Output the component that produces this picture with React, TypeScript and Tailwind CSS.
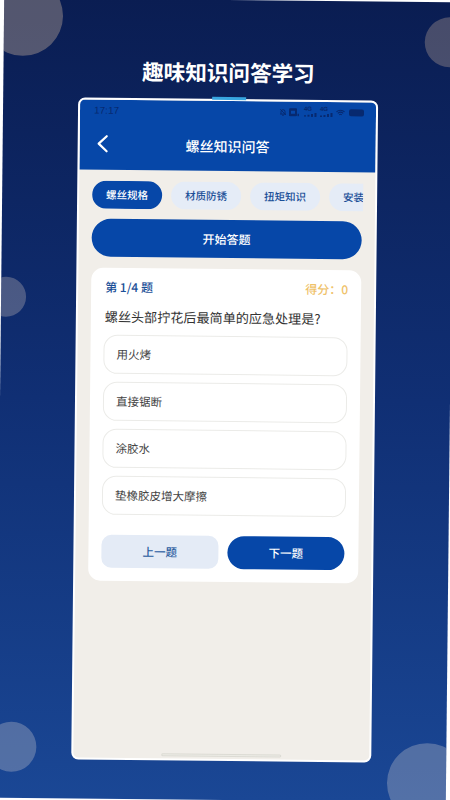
const font = "font-['Noto_Sans_CJK_SC','Noto_Sans',sans-serif]";

const tabs = ["螺丝规格", "材质防锈", "扭矩知识", "安装"];
const options = ["用火烤", "直接锯断", "涂胶水", "垫橡胶皮增大摩擦"];

const Signal = () => (
  <div className="relative w-[13px] h-[9px]">
    <span className="absolute left-0 top-[-2px] text-[6px] leading-[6px] font-bold font-['Liberation_Sans',sans-serif]">4G</span>
    <svg className="absolute left-0 bottom-0" width="13" height="4" viewBox="0 0 13 4" fill="currentColor">
      <rect x="0" y="2.5" width="2" height="1.5" />
      <rect x="3.5" y="2" width="2" height="2" />
      <rect x="7" y="1" width="2" height="3" />
      <rect x="10.5" y="0" width="2" height="4" />
    </svg>
  </div>
);

const StatusIcons = () => (
  <div className="flex items-center text-[#07296f]">
    {/* muted bell */}
    <svg width="8" height="9" viewBox="0 0 10 10" fill="none" stroke="currentColor" strokeWidth="1.2">
      <path d="M2.5 7.5V4.5a2.5 2.5 0 0 1 5 0v3M1.5 7.5h7M4 9h2M1.5 1.5l7 7" />
    </svg>
    {/* hd box */}
    <svg width="10" height="9" viewBox="0 0 10 9" className="ml-[2px]">
      <rect x="0" y="0.5" width="8" height="8" rx="1" fill="currentColor" />
      <rect x="2" y="3" width="4" height="3" fill="#0647a8" />
      <rect x="8.5" y="6" width="1.5" height="2.5" fill="currentColor" />
    </svg>
    <div className="ml-[5px]"><Signal /></div>
    <div className="ml-[3px]"><Signal /></div>
    <svg width="9" height="8" viewBox="0 0 10 8" fill="none" stroke="currentColor" strokeWidth="1.2" className="ml-[3px]">
      <path d="M0.5 2.5a6.5 6.5 0 0 1 9 0M2 4.2a4.4 4.4 0 0 1 6 0M3.6 5.8a2 2 0 0 1 2.8 0" />
    </svg>
    <div className="ml-[4px] w-[15px] h-[7px] rounded-[2px] bg-[#07296f]" />
  </div>
);

export default function App() {
  return (
    <div className={`w-[450px] h-[800px] overflow-hidden bg-white ${font}`}>
      <div className="relative w-[450px] h-[800px] rotate-[0.6deg] overflow-hidden bg-gradient-to-b from-[#0a1d52] via-[#102f74] to-[#1a4795] flex flex-col items-center pt-[56.5px]">
        {/* background circles */}
        <div className="absolute left-[-21px] top-[-22px] w-[80px] h-[80px] rounded-full bg-[#ffd9af]/30" />
        <div className="absolute left-[421px] top-[15px] w-[50px] h-[50px] rounded-full bg-[#ffd9af]/25" />
        <div className="absolute left-[-15px] top-[279px] w-[40px] h-[40px] rounded-full bg-[#ffe6d0]/25" />
        <div className="absolute left-[-10px] top-[724px] w-[50px] h-[50px] rounded-full bg-[#fff0e0]/25" />
        <div className="absolute left-[391px] top-[741px] w-[80px] h-[80px] rounded-full bg-[#fff0e0]/25" />

        <h1 className="relative h-[30px] text-[21.6px] leading-[30px] font-bold text-white">趣味知识问答学习</h1>

        {/* phone */}
        <div className="relative mt-[12px] w-[300px] h-[662px] rounded-[7px] border-2 border-white bg-[#f1eee9] flex flex-col overflow-hidden">
          <div className="shrink-0 h-[70px] bg-[#0647a8] flex flex-col">
            <div className="h-[22px] pl-[14px] pr-[12px] flex items-center justify-between">
              <span className="text-[10px] text-[#07296f] font-['Liberation_Sans',sans-serif]">17:17</span>
              <StatusIcons />
            </div>
            <div className="relative flex-1 flex items-center justify-center">
              <svg className="absolute left-[16px] top-[12px]" width="14" height="20" viewBox="0 0 14 20" fill="none" stroke="white" strokeWidth="2.2" strokeLinecap="round" strokeLinejoin="round">
                <path d="M11 2.5 3 10l8 7.5" />
              </svg>
              <span className="text-[14px] font-medium text-white">螺丝知识问答</span>
            </div>
          </div>

          <div className="px-[13px] pt-[11.5px]">
            <div className="flex gap-[9px] overflow-hidden -mr-[1px]">
              {tabs.map((t, i) => (
                <div
                  key={t}
                  className={`shrink-0 px-[14px] h-[28px] rounded-[14px] flex items-center justify-center text-[10.5px] font-medium ${
                    i === 0 ? "bg-[#0647a8] text-white" : "bg-[#e5ecf7] text-[#1b4f97]"
                  }`}
                >
                  {t}
                </div>
              ))}
            </div>

            <div className="mt-[9.5px] h-[38px] rounded-[19px] bg-[#0647a8] text-white text-[12px] font-medium flex items-center justify-center">
              开始答题
            </div>

            <div className="mt-[11px] h-[313px] rounded-[12px] bg-white px-[13px] flex flex-col">
              <div className="h-[38px] flex items-center justify-between pl-[1px]">
                <span className="text-[12px] font-medium text-[#1b4f97]">第 1/4 题</span>
                <span className="text-[12px] font-medium text-[#efc26a]">得分：0</span>
              </div>
              <div className="h-[21px] pl-[1px] text-[13.1px] leading-[21px] text-[#333333] whitespace-nowrap">
                螺丝头部拧花后最简单的应急处理是?
              </div>
              <div className="mt-[8px] flex flex-col gap-[7.5px]">
                {options.map((o) => (
                  <div
                    key={o}
                    className="h-[39.5px] rounded-[14px] border border-[#ebebe8] bg-white pl-[12px] flex items-center text-[11.5px] text-[#444444]"
                  >
                    {o}
                  </div>
                ))}
              </div>
              <div className="mt-[20px] flex justify-between pr-[1px]">
                <div className="w-[117px] h-[33px] rounded-[10px] bg-[#e4ebf6] text-[#2b5c9f] text-[11.5px] font-medium flex items-center justify-center">
                  上一题
                </div>
                <div className="w-[117px] h-[33px] rounded-[16.5px] bg-[#0647a8] text-white text-[11.5px] font-medium flex items-center justify-center">
                  下一题
                </div>
              </div>
            </div>
          </div>

          {/* home indicator */}
          <div className="absolute bottom-[2px] left-[88px] w-[120px] h-[3px] rounded-full bg-[#ecebe5] border-[0.5px] border-[#dcdbd4]" />
        </div>

        <div className="absolute left-[209px] top-[97px] w-[34px] h-[3px] bg-[#38a6e0]" />
      </div>
    </div>
  );
}
